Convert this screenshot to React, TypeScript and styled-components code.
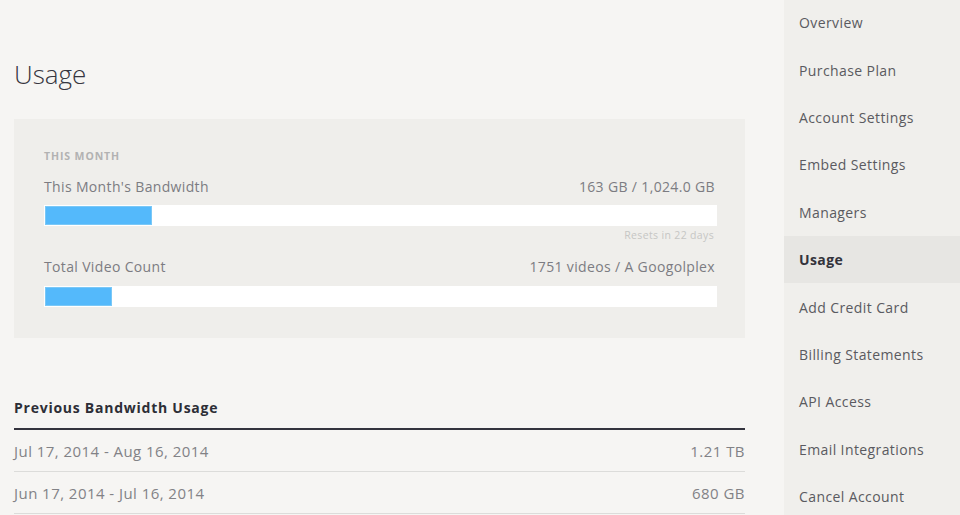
import React from "react";
import styled, { createGlobalStyle } from "styled-components";

const Global = createGlobalStyle`
  html, body { margin: 0; padding: 0; background: #f6f5f3; }
  body { font-family: "Open Sans", "Liberation Sans", sans-serif; -webkit-font-smoothing: antialiased; }
  * { box-sizing: border-box; }
`;

const Page = styled.div`
  display: flex;
  width: 960px;
  height: 515px;
  overflow: hidden;
  background: #f6f5f3;
`;

const Main = styled.main`
  flex: 1;
  padding: 58px 39px 0 14px;
`;

const Title = styled.h1`
  margin: 0;
  font-size: 26px;
  line-height: 32px;
  font-weight: 300;
  color: #363640;
`;

const Card = styled.section`
  margin-top: 29px;
  background: #efeeeb;
  padding: 30px 28px 31px 30px;
`;

const Eyebrow = styled.div`
  font-size: 10.5px;
  line-height: 14px;
  font-weight: 700;
  letter-spacing: 0.9px;
  color: #b2b2b2;
  text-transform: uppercase;
`;

const MetricRow = styled.div<{ $top: number }>`
  display: flex;
  justify-content: space-between;
  margin-top: ${(p) => p.$top}px;
  font-size: 14px;
  line-height: 20px;
  letter-spacing: 0.35px;
  color: #7c7c82;
`;

const Value = styled.span`
  padding-right: 2px;
`;

const Track = styled.div<{ $top: number }>`
  margin-top: ${(p) => p.$top}px;
  height: 21px;
  background: #ffffff;
  padding: 1px;
`;

const Fill = styled.div`
  height: 100%;
  background: #54b9fb;
  box-shadow: inset 0 0 0 1px #7ac8f7;
`;

const Note = styled.div`
  margin-top: 3px;
  text-align: right;
  font-size: 10.5px;
  line-height: 12px;
  letter-spacing: 0.35px;
  color: #c6c6c4;
  padding-right: 3px;
`;

const SectionTitle = styled.h2`
  margin: 60px 0 0;
  padding-bottom: 10px;
  border-bottom: 2px solid #33333d;
  font-size: 14px;
  line-height: 20px;
  font-weight: 700;
  color: #2d2e36;
  letter-spacing: 0.75px;
`;

const HistoryRow = styled.div`
  display: flex;
  justify-content: space-between;
  align-items: center;
  height: 42px;
  border-bottom: 1px solid #dcdcda;
  font-size: 15px;
  letter-spacing: 0.45px;
  color: #828286;
`;

const Sidebar = styled.nav`
  width: 176px;
  flex-shrink: 0;
  background: #f0efec;
`;

const NavList = styled.div`
  margin-top: -1px;
`;

const NavItem = styled.div<{ $active?: boolean }>`
  height: 47.4px;
  display: flex;
  align-items: center;
  padding-left: 15px;
  font-size: 14px;
  letter-spacing: 0.4px;
  color: ${(p) => (p.$active ? "#33333b" : "#5a5a60")};
  font-weight: ${(p) => (p.$active ? 700 : 400)};
  background: ${(p) => (p.$active ? "#e7e6e3" : "transparent")};
`;

const nav = [
  "Overview",
  "Purchase Plan",
  "Account Settings",
  "Embed Settings",
  "Managers",
  "Usage",
  "Add Credit Card",
  "Billing Statements",
  "API Access",
  "Email Integrations",
  "Cancel Account",
];

const history = [
  { range: "Jul 17, 2014 - Aug 16, 2014", amount: "1.21 TB" },
  { range: "Jun 17, 2014 - Jul 16, 2014", amount: "680 GB" },
];

export default function App() {
  return (
    <Page>
      <Global />
      <Main>
        <Title>Usage</Title>
        <Card>
          <Eyebrow>This Month</Eyebrow>
          <MetricRow $top={14}>
            <span>This Month's Bandwidth</span>
            <Value>163 GB / 1,024.0 GB</Value>
          </MetricRow>
          <Track $top={8}>
            <Fill style={{ width: `${(107 / 671) * 100}%` }} />
          </Track>
          <Note>Resets in 22 days</Note>
          <MetricRow $top={16}>
            <span>Total Video Count</span>
            <Value>1751 videos / A Googolplex</Value>
          </MetricRow>
          <Track $top={9}>
            <Fill style={{ width: `${(67 / 671) * 100}%` }} />
          </Track>
        </Card>
        <SectionTitle>Previous Bandwidth Usage</SectionTitle>
        {history.map((h) => (
          <HistoryRow key={h.range}>
            <span>{h.range}</span>
            <span>{h.amount}</span>
          </HistoryRow>
        ))}
      </Main>
      <Sidebar>
        <NavList>
          {nav.map((n) => (
            <NavItem key={n} $active={n === "Usage"}>
              {n}
            </NavItem>
          ))}
        </NavList>
      </Sidebar>
    </Page>
  );
}
